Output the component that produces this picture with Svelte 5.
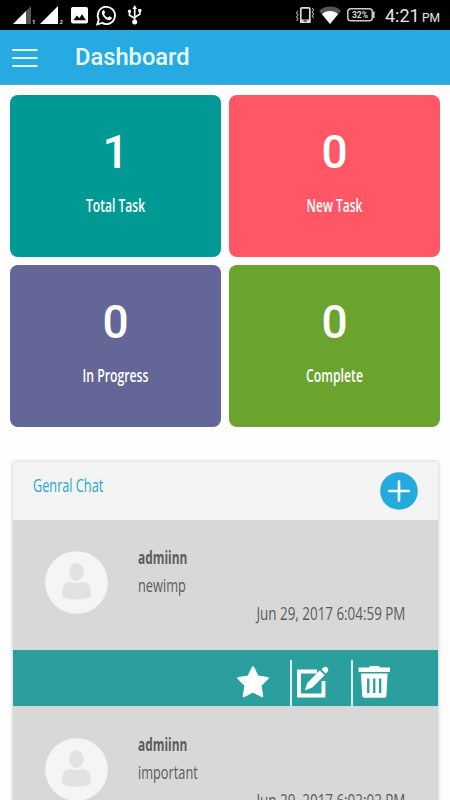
<script lang="ts">
  type Tile = { label: string; count: number; color: string; fit: number };
  type Message = { user: string; text: string; date: string; fit: number };

  // fit squeezes the regular-width face down to a narrow one
  let tiles: Tile[] = [
    { label: 'Total Task', count: 1, color: 'teal', fit: 0.69 },
    { label: 'New Task', count: 0, color: 'red', fit: 0.69 },
    { label: 'In Progress', count: 0, color: 'purple', fit: 0.7 },
    { label: 'Complete', count: 0, color: 'green', fit: 0.7 },
  ];
  let messages: Message[] = [
    { user: 'admiinn', text: 'newimp', date: 'Jun 29, 2017 6:04:59 PM', fit: 0.766 },
    { user: 'admiinn', text: 'important', date: 'Jun 29, 2017 6:02:02 PM', fit: 0.766 },
  ];
</script>

<div class="screen">
  <div class="status-bar">
    <svg width="150" height="30" viewBox="0 0 150 30">
      <path d="M13 24L26 11V24Z" fill="#fff" />
      <path d="M26 11L31 6V24H26Z" fill="#555" />
      <path d="M40 24L58 6V24Z" fill="#fff" />
      <text x="32" y="24" class="sim">1</text>
      <text x="59.5" y="24" class="sim">2</text>
      <rect x="71" y="7" width="17" height="16.5" rx="2" fill="#fff" />
      <path d="M73.3 20.3L77 15.6L79.3 18.3L82 14.3L86 20.3Z" fill="#000" />
      <path d="M97.3 24.3L98.8 19.6A8.6 8.6 0 1 1 102 22.9Z" fill="none" stroke="#fff" stroke-width="1.8" />
      <path d="M103.2 10.3C101.7 11.2 101.4 13.2 102.5 15.1C104 18 106.2 20 109 20.3C110.8 20.4 112 19 111.9 17.6L109.3 16.2L107.8 17.8C106 17 104.8 15.8 104.1 14.1L105.2 12.8L104.2 10.2Z" fill="#fff" />
      <g fill="none" stroke="#fff" stroke-width="1.7">
        <path d="M134.7 8V21" />
        <path d="M129.5 12V15.2L134.7 18.2" />
        <path d="M139.8 11.5V14.2L134.7 17.2" />
      </g>
      <path d="M134.7 5L137 9H132.4Z" fill="#fff" />
      <circle cx="134.7" cy="22" r="2.5" fill="#fff" />
      <circle cx="129.5" cy="11.2" r="1.6" fill="#fff" />
      <rect x="138.3" y="9" width="3" height="3" fill="#fff" />
    </svg>
    <div class="status-right">
      <svg width="84" height="30" viewBox="0 0 84 30">
        <rect x="5.8" y="7.8" width="9" height="14.2" rx="1" fill="none" stroke="#ddd" stroke-width="1.7" />
        <path d="M5 19.5H15.5V23H5Z" fill="#ddd" />
        <path d="M8.5 21H12" stroke="#000" />
        <path d="M3 11L1.5 13L3 15L1.5 17L3 19L1.5 21" fill="none" stroke="#aaa" stroke-width="1.1" />
        <path d="M17.2 8L18.7 10L17.2 12L18.7 14L17.2 16L18.7 18" fill="none" stroke="#aaa" stroke-width="1.1" />
        <path d="M24 10.8C30 5 41 5 46 10.8L35 24Z" fill="#555" />
        <path d="M27 14.2C31 10 39 10 43 14.2L35 24Z" fill="#fff" />
        <rect x="52.8" y="8.8" width="24.5" height="12" rx="3" fill="none" stroke="#ccc" stroke-width="1.5" />
        <path d="M78.7 11.5V18" stroke="#ccc" stroke-width="1.8" />
        <text x="65" y="18.3" class="charge" text-anchor="middle">32%</text>
      </svg>
      <span class="clock">4:21<small>PM</small></span>
    </div>
  </div>

  <header class="app-bar">
    <svg width="26" height="20" viewBox="0 0 26 20" fill="none" stroke="#e6ffff" stroke-width="2">
      <path d="M0 1H25.5M0 9H25.5M0 17H25.5" />
    </svg>
    <h1>Dashboard</h1>
  </header>

  <section class="tiles">
    {#each tiles as tile}
      <div class="tile {tile.color}">
        <div class="count">{tile.count}</div>
        <div class="label" style="transform: scaleX({tile.fit})">{tile.label}</div>
      </div>
    {/each}
  </section>

  <section class="panel">
    <div class="panel-head">
      <h2>Genral Chat</h2>
      <button type="button" class="add-btn" aria-label="Add chat">
        <svg width="38" height="38" viewBox="0 0 38 38">
          <circle cx="19" cy="19" r="18.8" fill="#23abe0" />
          <path d="M19 9.5V28.5M9.3 19H28.7" stroke="#fff" stroke-width="2.6" stroke-linecap="round" />
        </svg>
      </button>
    </div>

    {#each messages as message, i}
      <article class="message">
        <svg class="avatar" width="63" height="63" viewBox="0 0 63 63">
          <circle cx="31.5" cy="31.5" r="31.3" fill="#f5f5f5" />
          <ellipse cx="31.5" cy="21" rx="7.3" ry="9" fill="#e2e2e2" />
          <path d="M17.3 45C17 35 19.5 31 26 31C29.5 32.6 33.5 32.6 37 31C43.5 31 46 35 45.7 45C45.7 49.8 17.3 49.8 17.3 45Z" fill="#e2e2e2" />
        </svg>
        <div class="body">
          <strong>{message.user}</strong>
          <p>{message.text}</p>
          <time style="transform: scaleX({message.fit})">{message.date}</time>
        </div>
      </article>
      {#if i === 0}
        <div class="actions">
          <button type="button" aria-label="Favourite">
            <svg width="34" height="34" viewBox="0 0 34 34">
              <path d="M17 2.5L21.5 11.7L31.5 13.2L24.2 20.3L26 31L17 26.2L8 31L9.8 20.3L2.5 13.2L12.5 11.7Z" fill="#fff" stroke="#fff" stroke-width="2.5" stroke-linejoin="round" />
            </svg>
          </button>
          <button type="button" class="divided" aria-label="Edit">
            <svg width="34" height="34" viewBox="0 0 34 34">
              <path d="M21 6.5H3V30.5H27.5V16" fill="none" stroke="#fff" stroke-width="3.8" />
              <path d="M9.5 24.8L12 17.8L23.8 5.8L28.2 10.2L16.3 22Z" fill="#fff" stroke="#fff" />
              <path d="M25.6 4.4L27.5 2.5C29.8 .2 33.9 4.3 31.7 6.6L29.6 8.7Z" fill="#fff" />
            </svg>
          </button>
          <button type="button" class="divided" aria-label="Delete">
            <svg width="34" height="34" viewBox="0 0 34 34">
              <path d="M1.5 2.5H12L13 1H22L23 2.5H33V7H1.5Z" fill="#fff" />
              <path fill-rule="evenodd" d="M4 8.5H30.6L29.4 31Q29.2 32.7 27.6 32.7H7.2Q5.5 32.7 5.2 31ZM10.1 13.5V28H12.4V13.5ZM16.1 13.5V28H18.4V13.5ZM22 13.5V28H24.3V13.5Z" fill="#fff" />
            </svg>
          </button>
        </div>
      {/if}
    {/each}
  </section>
</div>

<style>
:global(body) {
  margin: 0;
  background: #fff;
}
.screen {
  width: 450px;
  height: 800px;
  overflow: hidden;
  background: #fefefe;
  font-family: "Open Sans", "Noto Sans", sans-serif;
}
.status-bar {
  display: flex;
  justify-content: space-between;
  height: 30px;
  background: #000;
}
.sim {
  font: 700 6px "Roboto", sans-serif;
  fill: #ddd;
}
.charge {
  font: 700 8.5px "Roboto", sans-serif;
  fill: #ddd;
}
.status-right {
  display: flex;
  padding-right: 10px;
}
.clock {
  display: flex;
  align-items: baseline;
  justify-content: space-between;
  width: 55px;
  margin-left: 6px;
  font: 18px/32px "Roboto", sans-serif;
  color: #e8e8e8;
}
.clock small {
  font-size: 12px;
}
.app-bar {
  display: flex;
  align-items: center;
  gap: 38px;
  box-sizing: border-box;
  height: 55px;
  padding: 0 12px;
  background: #27aae1;
  border-bottom: 1px solid #5ba8c8;
}
.app-bar svg {
  margin-top: 4px;
  flex: none;
}
h1 {
  margin: 0;
  margin-left: -1px;
  font: 500 23.7px/54px "Roboto", sans-serif;
  color: #e6ffff;
}
.tiles {
  display: grid;
  grid-template-columns: 211px 211px;
  gap: 8px;
  padding: 10px 10px 0;
}
.tile {
  box-sizing: border-box;
  height: 162px;
  padding-top: 30px;
  border-radius: 8px;
  color: #fff;
  text-align: center;
}
.teal {
  background: #009994;
}
.red {
  background: #ff5765;
}
.purple {
  background: #636696;
}
.green {
  background: #6aa42f;
}
.count {
  font: 500 46px/54px "Roboto", sans-serif;
}
.label {
  margin-top: 13.5px;
  font-size: 17.5px;
  line-height: 24px;
  font-weight: 600;
}
.panel {
  width: 425px;
  margin: 34.5px auto 0;
  background: #d8d8d8;
  box-shadow: 0 0 4px rgba(0, 0, 0, 0.25);
}
.panel-head {
  display: flex;
  justify-content: space-between;
  align-items: flex-start;
  box-sizing: border-box;
  height: 58.5px;
  padding: 10.5px 20px 0;
  background: #f4f4f4;
}
h2 {
  margin: 0;
  font-size: 17.5px;
  line-height: 26px;
  font-weight: 400;
  color: #27a5cf;
  transform: scaleX(0.725);
  transform-origin: left;
}
button {
  display: block;
  padding: 0;
  border: none;
  background: none;
  cursor: pointer;
}
.message {
  display: flex;
  box-sizing: border-box;
  height: 130px;
  padding: 30.5px 32px 0;
  color: #5c5c5c;
}
.avatar {
  flex: none;
}
.body {
  display: flex;
  flex: 1;
  flex-direction: column;
  margin: -8px 0 0 30.5px;
  font-size: 17.5px;
  line-height: 28px;
}
.body strong {
  font-weight: 700;
  transform: scaleX(0.68);
  transform-origin: left;
}
.body p {
  margin: 0;
  transform: scaleX(0.73);
  transform-origin: left;
}
.body time {
  align-self: flex-end;
  white-space: nowrap;
  transform-origin: right;
}
.actions {
  display: flex;
  justify-content: flex-end;
  box-sizing: border-box;
  height: 56px;
  margin-bottom: 1.5px;
  padding: 10px 26px 0 0;
  background: #2b9f9e;
}
.actions button {
  width: 54px;
  height: 46px;
  text-align: left;
}
.actions svg {
  display: block;
  margin-bottom: 3px;
}
.actions .divided {
  width: 61px;
  padding-left: 4px;
  border-left: 2px solid #d9f5f4;
}
</style>
